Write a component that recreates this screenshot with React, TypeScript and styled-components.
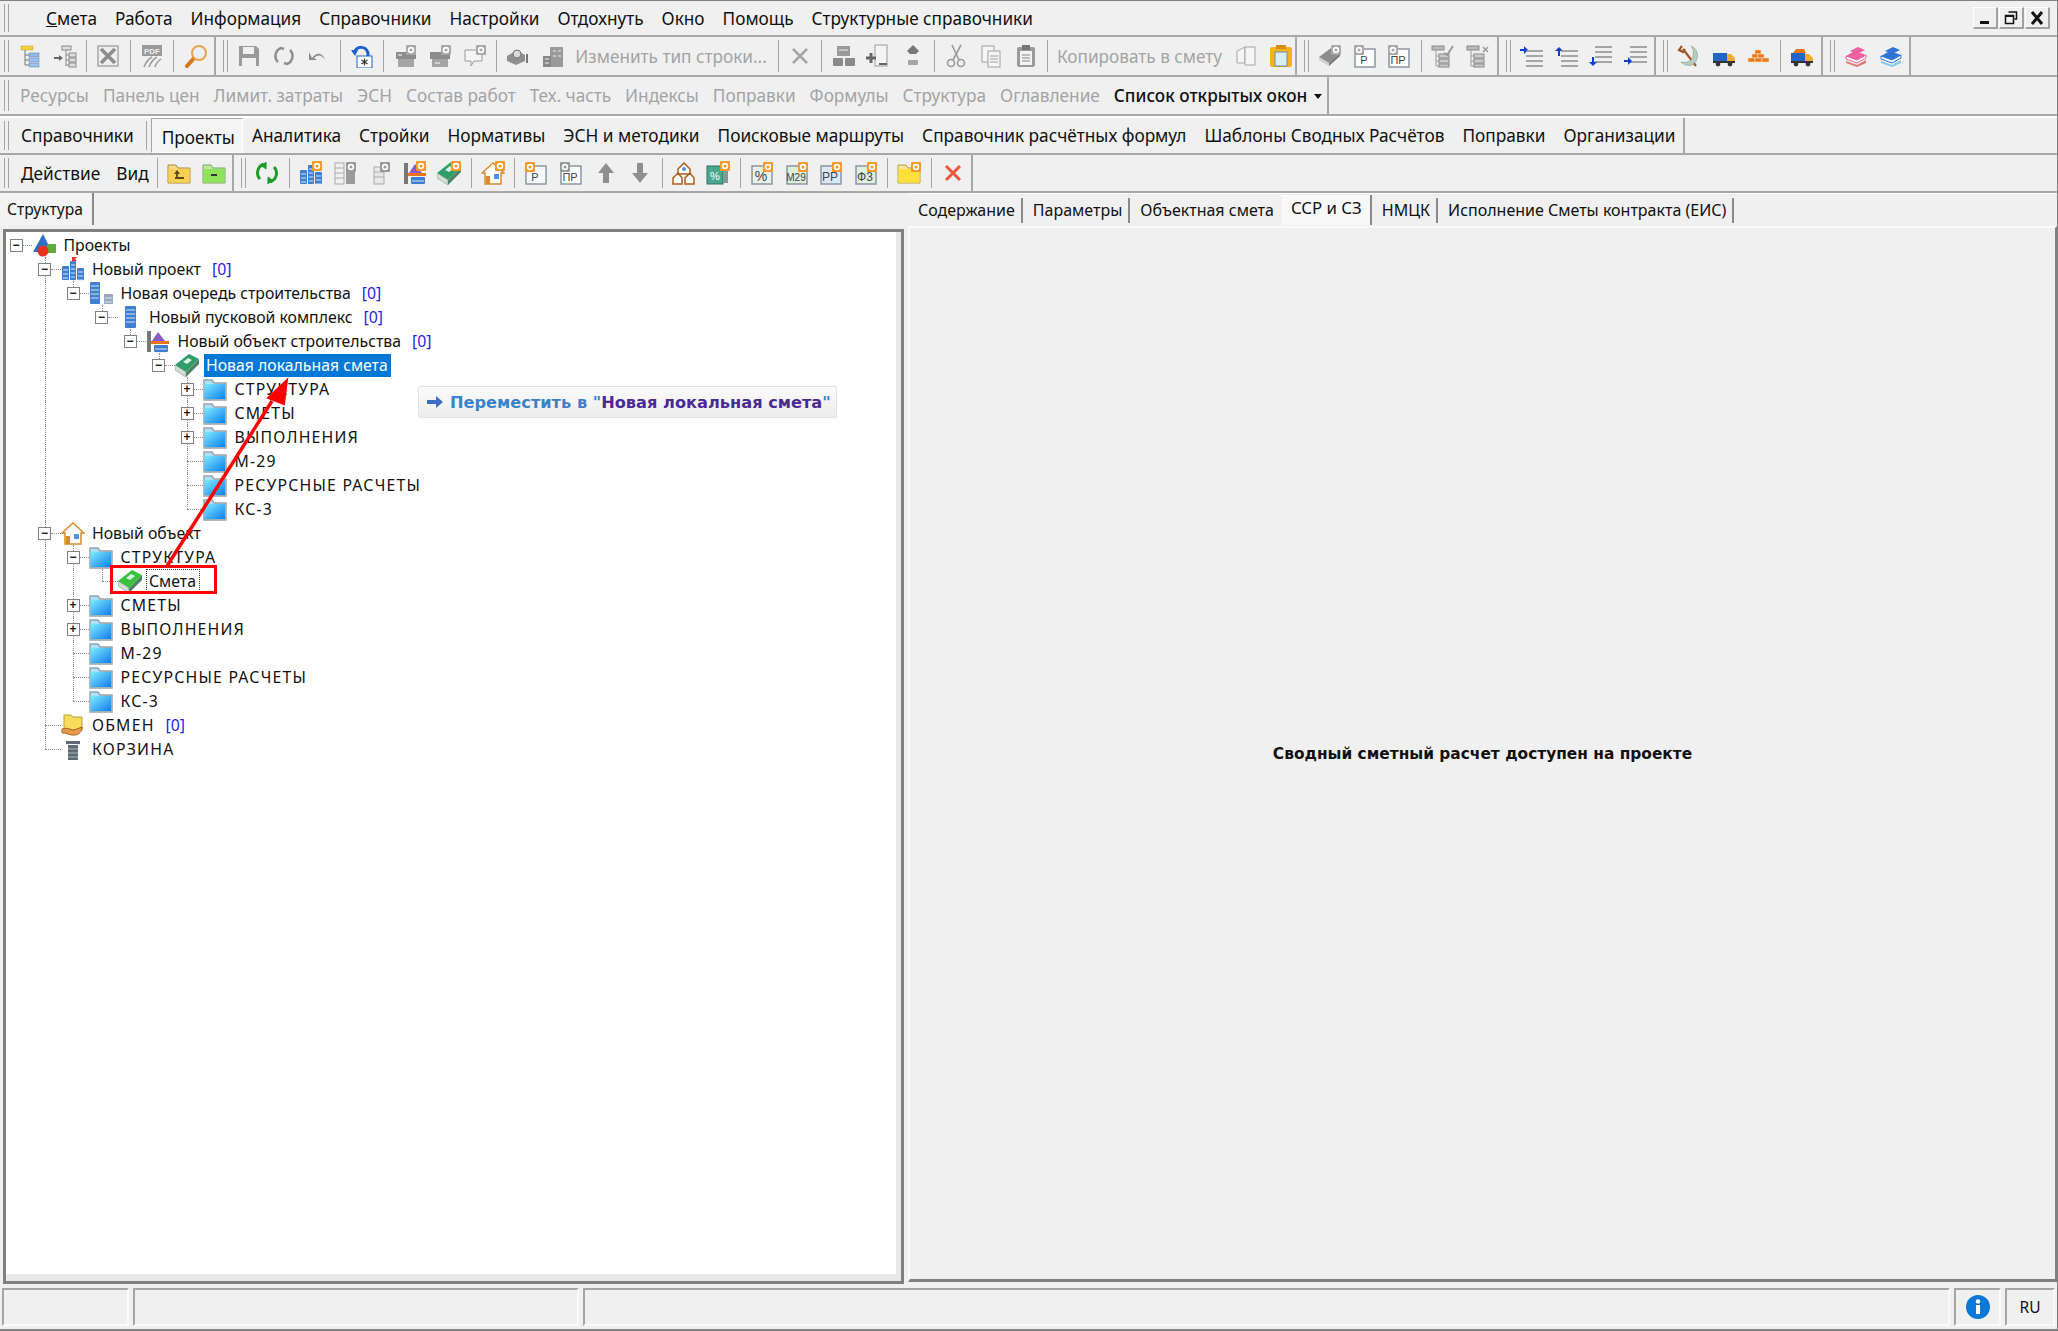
import React, { FC, ReactNode } from "react";
import styled, { createGlobalStyle } from "styled-components";

const UI_FONT = `"Noto Sans", "Liberation Sans", Arial, sans-serif`;

const GlobalStyle = createGlobalStyle`
  html, body { margin: 0; padding: 0; background: #f0f0f0; }
  body { font-family: ${UI_FONT}; color: #111; overflow: hidden; }
`;

//---------------------------------icons-----------------------------------
const Gear: FC<{ x: number; y: number; c?: string }> = ({ x, y, c = "#f39a2b" }) => (
  <g>
    <rect x={x} y={y} width="10" height="10" rx="1" fill={c} />
    <circle cx={x + 5} cy={y + 5} r="2.4" fill="none" stroke="#fff" strokeWidth="1.6" />
  </g>
);

const Folder: FC<{ a: string; b: string; edge?: string }> = ({ a, b, edge = "#8f9aa0" }) => (
  <g>
    <path d="M1 4h8l2 3h12v15H1z" fill={b} stroke={edge} />
    <rect x="1.5" y="8" width="21" height="13.5" fill={a} />
  </g>
);

const BlueFolder = () => (
  <g>
    <defs>
      <linearGradient id="folderFill" x1="0" y1="0" x2="1" y2="1">
        <stop offset="0" stopColor="#7fecff" />
        <stop offset="1" stopColor="#0a7fee" />
      </linearGradient>
    </defs>
    <path d="M1 3h8l2 3h12v17H1z" fill="#a7e4fa" stroke="#9aa3a8" strokeWidth="1.5" />
    <rect x="1.5" y="7" width="20.5" height="15" fill="url(#folderFill)" />
  </g>
);

const Arrow: FC<{ d: "l" | "r"; x: number; y: number }> = ({ d, x, y }) => (
  <path
    d={d === "r" ? `M${x} ${y - 1}h4v-3l4 4-4 4v-3h-4z` : `M${x + 8} ${y - 1}h-4v-3l-4 4 4 4v-3h4z`}
    fill="#0b3fd0"
  />
);

const Lines: FC<{ x: number; y: number; w: number }> = ({ x, y, w }) => (
  <g stroke="#8d8d8d" strokeWidth="1.5">
    {[0, 5, 10, 15].map((o) => (
      <path key={o} d={`M${x} ${y + o}h${w}`} />
    ))}
  </g>
);

const Doc: FC<{ label: string; gear?: string; gearRight?: boolean; fill?: string; c?: string; size?: number }> = ({
  label,
  gear,
  gearRight,
  fill = "#fff",
  c = "#444",
  size = 11,
}) => (
  <g>
    <rect x="2" y="5" width="20" height="18" fill={fill} stroke="#8a96a3" strokeWidth="1.5" />
    <text x="11" y="20" fontSize={size} fontFamily="Liberation Sans" textAnchor="middle" fill={c}>
      {label}
    </text>
    {gear && <Gear x={gearRight ? 13 : 1} y={1} c={gear} />}
  </g>
);

const Truck: FC<{ load?: boolean }> = ({ load }) => (
  <g>
    {load && <path d="M3 9l3-4h8l2 4z" fill="#e8751a" />}
    <rect x="1" y="9" width="14" height="8" fill="#1f66c8" />
    <path d="M15 10h4l4 4v4h-8z" fill="#e9b12b" />
    <rect x="1" y="17" width="22" height="2" fill="#333" />
    <circle cx="6" cy="20" r="2.4" fill="#333" />
    <circle cx="18" cy="20" r="2.4" fill="#333" />
  </g>
);

const Books: FC<{ a: string; b: string }> = ({ a, b }) => (
  <g>
    <path d="M2 12l9-5 11 4-9 5z" fill={a} />
    <path d="M2 12v3l11 4 9-5v-3l-9 5z" fill="#fff" stroke={a} />
    <path d="M2 17l11 4 9-5v3l-9 4-11-4z" fill={b} opacity=".75" />
    <path d="M6 7l8-4 7 3-8 4z" fill={a} />
  </g>
);

const Tall: FC<{ x: number; w: number; y?: number; c?: string }> = ({ x, w, y = 1, c = "#3f7fd0" }) => (
  <g>
    <rect x={x} y={y} width={w} height={23 - y} rx="1" fill={c} />
    {[4, 8, 12, 16].map((o) => (
      <path key={o} d={`M${x + 1} ${y + o}h${w - 2}`} stroke="#d6e6fa" />
    ))}
  </g>
);

const Bricks = (
  <g fill="#e8741c" stroke="#fbe3c6" strokeWidth=".6">
    <rect x="9" y="6" width="6" height="4" />
    <rect x="6" y="10" width="6" height="4" />
    <rect x="12" y="10" width="6" height="4" />
    <rect x="2" y="14" width="7" height="4" />
    <rect x="9" y="14" width="7" height="4" />
    <rect x="16" y="14" width="7" height="4" />
  </g>
);

const Buildings = (
  <g>
    <Tall x={1} w={7} y={9} />
    <Tall x={9} w={6} y={4} />
    <Tall x={16} w={7} y={11} />
  </g>
);

const Crane = (
  <g>
    <rect x="1" y="2" width="4" height="21" fill="#777" />
    <path d="M12 3l-6 9h13z" fill="#8a5bc4" />
    <rect x="5" y="12" width="18" height="3" fill="#e8741c" />
    <Tall x={8} w={14} y={16} />
  </g>
);

const GreenBook: FC<{ c?: string }> = ({ c = "#2e9e68" }) => (
  <g>
    <path d="M0 12L14 1l10 5-13 13z" fill={c} />
    <path d="M0 12l11 7v5L0 17z" fill="#d5ddd7" stroke="#7c9a86" strokeWidth=".6" />
    <path d="M11 19L24 6v5L11 24z" fill="#4e8263" />
    <path d="M8 9l5-4 4 2-5 4z" fill="#d7f0e2" />
  </g>
);

const House = (
  <g>
    <path d="M12 2L1 12h3v11h16V12h3z" fill="#fff" stroke="#d98a2a" strokeWidth="1.5" />
    <rect x="5" y="15" width="4" height="8" fill="#d98a2a" />
    <rect x="13" y="13" width="5" height="5" fill="#4b93e0" />
  </g>
);

const Cross: FC<{ c: string; w?: number }> = ({ c, w = 3 }) => (
  <path d="M5 5l14 14M19 5L5 19" stroke={c} strokeWidth={w} fill="none" />
);

const ICONS: Record<string, ReactNode> = {
  treeYellow: (
    <g>
      <rect x="3" y="2" width="12" height="4" fill="#f2d23a" stroke="#b9a030" strokeWidth=".5" />
      <path d="M7 6v15M7 11h4M7 16h4M7 21h4" stroke="#777" />
      <rect x="11" y="9" width="10" height="4" fill="#8db9e6" stroke="#5f7ea0" strokeWidth=".5" />
      <rect x="11" y="14" width="10" height="4" fill="#9bc2ea" stroke="#5f7ea0" strokeWidth=".5" />
      <rect x="11" y="19" width="10" height="4" fill="#9bc2ea" stroke="#5f7ea0" strokeWidth=".5" />
    </g>
  ),
  treeArrow: (
    <g>
      <path d="M1 13h5v-2l4 3-4 3v-2H1z" fill="#666" />
      <path d="M13 6v16M13 11h3M13 16h3M13 21h3" stroke="#888" />
      <rect x="9" y="2" width="9" height="4" fill="#ddd" stroke="#888" />
      <rect x="16" y="9" width="7" height="4" fill="#ddd" stroke="#888" />
      <rect x="16" y="14" width="7" height="4" fill="#ddd" stroke="#888" />
      <rect x="16" y="19" width="7" height="4" fill="#ddd" stroke="#888" />
    </g>
  ),
  excel: (
    <g>
      <rect x="2" y="2" width="20" height="20" fill="#eeeeee" stroke="#a8a8a8" strokeWidth="1.5" />
      <Cross c="#8c8c8c" w={3.5} />
    </g>
  ),
  pdf: (
    <g>
      <rect x="2" y="1" width="20" height="11" fill="#9a9a9a" />
      <text x="12" y="9.5" fontSize="8" fontWeight="700" fill="#eee" textAnchor="middle" fontFamily="Liberation Sans">
        PDF
      </text>
      <path d="M4 23c2-5 4-8 8-10M9 23c2-5 4-8 8-10M15 23c1-4 3-6 6-8" stroke="#9a9a9a" fill="none" strokeWidth="1.5" />
    </g>
  ),
  magnifier: (
    <g>
      <path d="M3 22l8-9" stroke="#d8741c" strokeWidth="4" strokeLinecap="round" />
      <circle cx="15" cy="9" r="7" fill="#e8f1fb" stroke="#e8a24a" strokeWidth="2" />
    </g>
  ),
  save: (
    <g>
      <path d="M2 2h17l3 3v17H2z" fill="#9a9a9a" />
      <rect x="6" y="3" width="11" height="7" fill="#f0f0f0" />
      <rect x="5" y="14" width="14" height="8" fill="#f0f0f0" />
    </g>
  ),
  refreshGray: (
    <g fill="none" stroke="#8f8f8f" strokeWidth="2.5">
      <path d="M6 18a8.5 8.5 0 0 1 3-14l3 1M18 6a8.5 8.5 0 0 1-3 14l-3-1" />
    </g>
  ),
  undoGray: <path d="M6 14l-3-6v8h8l-3-2c4-4 8-3 11 2-2-7-8-9-13-2z" fill="#8a8a8a" />,
  undoStar: (
    <g>
      <path d="M4 9c3-8 12-7 14 0v3" fill="none" stroke="#1d5fd0" strokeWidth="3" />
      <path d="M1 6l7 0-3 6z" fill="#1d5fd0" />
      <rect x="7" y="12" width="15" height="12" fill="#fff" stroke="#1d5fd0" />
      <path d="M14.5 14.5v7M11.5 16l6 4M17.5 16l-6 4" stroke="#333" strokeWidth="1.2" />
    </g>
  ),
  boxGear1: (
    <g>
      <rect x="2" y="8" width="20" height="7" fill="#8c8c8c" />
      <rect x="4" y="15" width="16" height="8" fill="#a5a5a5" />
      <Gear x={12} y={1} c="#a8a8a8" />
      <path d="M4 11h4" stroke="#fff" />
    </g>
  ),
  boxGear2: (
    <g>
      <rect x="2" y="8" width="20" height="7" fill="#8c8c8c" />
      <rect x="4" y="15" width="16" height="8" fill="#a5a5a5" />
      <Gear x={13} y={1} c="#a8a8a8" />
      <path d="M7 19h5" stroke="#fff" />
    </g>
  ),
  bubbleGear: (
    <g>
      <path d="M2 6h17v11h-8l-3 5v-5H2z" fill="#f5f5f5" stroke="#9a9a9a" />
      <Gear x={13} y={1} c="#a8a8a8" />
    </g>
  ),
  gearStack: (
    <g>
      <path d="M1 12l10-6 8 5v6l-9 4-9-4z" fill="#8f8f8f" />
      <circle cx="11" cy="10" r="4" fill="#d8d8d8" stroke="#777" />
      <path d="M21 10v9" stroke="#777" strokeWidth="2" />
    </g>
  ),
  buildingsGray: (
    <g>
      <rect x="9" y="3" width="13" height="20" fill="#9a9a9a" />
      <rect x="2" y="12" width="8" height="11" fill="#888" />
      <path d="M4 15h4M4 19h4M12 7h3M17 7h3M12 12h3M17 12h3" stroke="#eee" />
    </g>
  ),
  closeGray: <Cross c="#a5a5a5" w={2.5} />,
  calc: (
    <g>
      <rect x="5" y="2" width="13" height="10" fill="#9a9a9a" />
      <rect x="1" y="14" width="10" height="8" rx="1" fill="#8a8a8a" />
      <rect x="13" y="14" width="10" height="8" rx="1" fill="#8a8a8a" />
      <path d="M7 6h9" stroke="#eee" />
    </g>
  ),
  docPlus: (
    <g>
      <rect x="9" y="1" width="12" height="21" fill="#f4f4f4" stroke="#999" />
      <path d="M0 14h10M5 9v10" stroke="#666" strokeWidth="3" />
      <path d="M13 20h8" stroke="#666" strokeWidth="2" />
    </g>
  ),
  diamond: (
    <g fill="#777">
      <path d="M12 1l6 6-3 3H9L6 7z" />
      <rect x="7" y="16" width="10" height="5" rx="1" fill="#a5a5a5" />
    </g>
  ),
  scissors: (
    <g fill="none" stroke="#9a9a9a" strokeWidth="1.6">
      <path d="M8 1l7 15M17 1l-8 15" />
      <circle cx="7" cy="19" r="3.5" />
      <circle cx="17" cy="19" r="3.5" />
    </g>
  ),
  copy: (
    <g fill="#f5f5f5" stroke="#a0a0a0">
      <rect x="3" y="2" width="12" height="16" />
      <rect x="9" y="7" width="12" height="16" />
      <path d="M11 12h8M11 15h8M11 18h8" />
    </g>
  ),
  clipboard: (
    <g>
      <rect x="3" y="3" width="18" height="20" rx="2" fill="#9a9a9a" />
      <rect x="6" y="7" width="12" height="14" fill="#f2f2f2" />
      <rect x="8" y="1" width="8" height="5" fill="#777" />
      <path d="M8 11h8M8 14h8M8 17h8" stroke="#888" />
    </g>
  ),
  copyDocs: (
    <g fill="#f5f5f5" stroke="#a5a5a5">
      <path d="M3 7l8-4v16H3z" />
      <path d="M11 3h10v18H11z" />
    </g>
  ),
  clipYellow: (
    <g>
      <rect x="1" y="3" width="22" height="20" rx="2" fill="#f5b21f" />
      <rect x="7" y="1" width="10" height="4" fill="#d98e10" />
      <rect x="6" y="8" width="12" height="14" fill="#d8edf7" stroke="#6d8ea0" />
    </g>
  ),
  bookGearGray: (
    <g>
      <path d="M1 13L13 4l9 5-11 10z" fill="#8c8c8c" />
      <path d="M1 13l10 6v3L1 16z" fill="#ccc" />
      <path d="M11 19L22 9v3L11 22z" fill="#777" />
      <Gear x={13} y={1} c="#a8a8a8" />
    </g>
  ),
  pGray: <Doc label="Р" gear="#a8a8a8" />,
  prGray: <Doc label="ПР" gear="#a8a8a8" />,
  treeCheck: (
    <g>
      <rect x="1" y="2" width="12" height="4" fill="#bbb" stroke="#888" />
      <path d="M5 6v16M5 12h3M5 17h3M5 22h3" stroke="#999" />
      <rect x="8" y="10" width="10" height="4" fill="#ccc" stroke="#888" />
      <rect x="8" y="15" width="10" height="4" fill="#ccc" stroke="#888" />
      <rect x="8" y="20" width="10" height="3" fill="#ccc" stroke="#888" />
      <path d="M13 9l3 2 6-9" stroke="#999" strokeWidth="2" fill="none" />
    </g>
  ),
  treeX: (
    <g>
      <rect x="1" y="2" width="12" height="4" fill="#bbb" stroke="#888" />
      <path d="M5 6v16M5 12h3M5 17h3M5 22h3" stroke="#999" />
      <rect x="8" y="10" width="10" height="4" fill="#ccc" stroke="#888" />
      <rect x="8" y="15" width="10" height="4" fill="#ccc" stroke="#888" />
      <rect x="8" y="20" width="10" height="3" fill="#ccc" stroke="#888" />
      <path d="M17 3l5 5M22 3l-5 5" stroke="#999" strokeWidth="1.5" />
    </g>
  ),
  indentRight: (
    <g>
      <Arrow d="r" x={0} y={6} />
      <Lines x={6} y={7} w={17} />
    </g>
  ),
  indentUp: (
    <g>
      <path d="M3 10V5H0l4-4 4 4H5v5z" fill="#0b3fd0" transform="translate(0,2)" />
      <Lines x={6} y={7} w={17} />
    </g>
  ),
  indentDown: (
    <g>
      <Lines x={6} y={3} w={17} />
      <path d="M3 13v5H0l4 4 4-4H5v-5z" fill="#0b3fd0" />
    </g>
  ),
  indentLeft: (
    <g>
      <Lines x={6} y={3} w={17} />
      <Arrow d="r" x={0} y={17} />
    </g>
  ),
  hammer: (
    <g fill="none">
      <path d="M5 2l-3 4 4 2 2-3M6 5l13 17" stroke="#a0552a" strokeWidth="2.2" />
      <path d="M14 2c8 3 9 14 1 19-4 1-8 0-11-3 5 1 11 0 12-6 1-4 0-7-2-10z" fill="#b9cdbe" stroke="#7d9a86" strokeWidth=".6" />
    </g>
  ),
  truck: <Truck />,
  bricks: Bricks,
  truckLoad: <Truck load />,
  booksPink: <Books a="#ec5fa0" b="#e24c4c" />,
  booksBlue: <Books a="#2d74d6" b="#5fbbe8" />,
  folderUp: (
    <g>
      <Folder a="#f9cf55" b="#f4d98a" edge="#a98c3a" />
      <path d="M8 17h9M10 10v7" stroke="#5c4a18" strokeWidth="1.8" />
      <path d="M7 13l3-4 3 4z" fill="#5c4a18" />
    </g>
  ),
  folderGreen: (
    <g>
      <Folder a="#8fe25a" b="#bdeb9a" edge="#7da267" />
      <path d="M9 14h6" stroke="#333" strokeWidth="2" />
    </g>
  ),
  refreshGreen: (
    <g fill="none" stroke="#1f9a2c" strokeWidth="3">
      <path d="M5 18a9 9 0 0 1 3-14.5l3 1M19 6a9 9 0 0 1-3 14.5l-3-1" />
      <path d="M11 1v7l-4-3zM13 23v-7l4 3z" fill="#1f9a2c" strokeWidth="1" />
    </g>
  ),
  buildingsGear: (
    <g>
      {Buildings}
      <Gear x={13} y={0} />
    </g>
  ),
  columnsGray: (
    <g>
      <rect x="2" y="2" width="9" height="21" fill="#f0f0f0" stroke="#aaa" />
      <path d="M2 7h9M2 12h9M2 17h9" stroke="#aaa" />
      <rect x="13" y="9" width="9" height="14" fill="#9a9a9a" />
      <Gear x={13} y={1} c="#999" />
    </g>
  ),
  columnGray: (
    <g>
      <rect x="6" y="6" width="10" height="17" fill="#e8e8e8" stroke="#aaa" />
      <path d="M6 11h10M6 16h10" stroke="#aaa" />
      <Gear x={12} y={1} c="#999" />
    </g>
  ),
  craneGear: (
    <g>
      {Crane}
      <Gear x={13} y={0} />
    </g>
  ),
  bookGear: (
    <g>
      <GreenBook />
      <Gear x={14} y={0} />
    </g>
  ),
  houseGear: (
    <g>
      {House}
      <Gear x={14} y={0} />
    </g>
  ),
  pOrange: <Doc label="Р" gear="#f39a2b" fill="#f7f9ff" />,
  prSilver: <Doc label="ПР" gear="#999" />,
  upGray: <path d="M12 2l8 10h-5v10H9V12H4z" fill="#8f8f8f" />,
  downGray: <path d="M12 22l8-10h-5V2H9v10H4z" fill="#8f8f8f" />,
  houses: (
    <g fill="#fff" stroke="#b05a18" strokeWidth="1.5">
      <path d="M12 2L6 8v5h12V8z" />
      <path d="M6 12l-5 5v6h9v-6zM18 12l-5 5v6h9v-6z" />
      <circle cx="12" cy="8" r="2" fill="#4b93e0" stroke="none" />
    </g>
  ),
  percentStack: (
    <g>
      <rect x="1" y="5" width="16" height="18" fill="#4aa88f" stroke="#2f6f60" />
      <rect x="17" y="7" width="5" height="15" fill="#7f9c94" />
      <text x="9" y="19" fontSize="11" fontFamily="Liberation Sans" fill="#fff" textAnchor="middle">
        %
      </text>
      <Gear x={14} y={0} />
    </g>
  ),
  percent: <Doc label="%" gear="#f39a2b" gearRight fill="#e8f2ec" size={14} />,
  m29: <Doc label="М29" gear="#f39a2b" gearRight fill="#dcefd8" size={10} />,
  pp: <Doc label="РР" gear="#f39a2b" gearRight fill="#dde8f7" size={12} />,
  f3: <Doc label="Ф3" gear="#f39a2b" gearRight fill="#e0f0e0" size={12} />,
  folderGear: (
    <g>
      <Folder a="#ffe03a" b="#f7e79a" edge="#b79f3a" />
      <Gear x={14} y={1} />
    </g>
  ),
  closeRed: <Cross c="#f0563c" w={3} />,
  // tree nodes
  projects: (
    <g>
      <path d="M11 1l9 18H1z" fill="#2d6fc4" />
      <rect x="15" y="11" width="9" height="9" fill="#5fae3c" />
      <circle cx="11" cy="18" r="5.5" fill="#e8321c" />
    </g>
  ),
  buildings: (
    <g>
      {Buildings}
      <path d="M11 0h5l-2 2 2 2h-5z" fill="#e33" />
    </g>
  ),
  queue: (
    <g>
      <Tall x={1} w={10} y={1} />
      <Tall x={15} w={9} y={13} c="#9aa8ba" />
    </g>
  ),
  complex: <Tall x={7} w={11} y={1} />,
  crane: Crane,
  bookDark: <GreenBook />,
  bookBright: <GreenBook c="#39c23c" />,
  folderBlue: <BlueFolder />,
  house: House,
  exchange: (
    <g>
      <path d="M3 2h7l2 2h9v13H3z" fill="#f6dc58" stroke="#b79f3a" />
      <path d="M1 16c5-2 9 1 12 1l8-3c1 3-3 8-7 8-5 1-9-3-13-2z" fill="#e89a4a" stroke="#a9621f" />
    </g>
  ),
  trash: (
    <g>
      <rect x="5" y="4" width="14" height="3" fill="#5d6a75" />
      <rect x="7" y="8" width="10" height="15" fill="#5d6a75" />
      <path d="M7 12h10M7 16h10M7 20h10" stroke="#aab3ba" />
    </g>
  ),
};

const Icon: FC<{ name: string }> = ({ name }) => (
  <svg width="24" height="24" viewBox="0 0 24 24">
    {ICONS[name]}
  </svg>
);

//---------------------------------data-----------------------------------
type Tool = string; // "|" разделитель, "t:..." подпись, иначе имя иконки

const TOP_SECTIONS: { width: number; tools: Tool[] }[] = [
  { width: 216, tools: ["treeYellow", "treeArrow", "|", "excel", "|", "pdf", "|", "magnifier"] },
  {
    width: 1081,
    tools: [
      "save", "refreshGray", "undoGray", "|", "undoStar", "|", "boxGear1", "boxGear2", "bubbleGear", "|",
      "gearStack", "buildingsGray", "t:Изменить тип строки...", "|", "closeGray", "|", "calc", "docPlus", "diamond", "|",
      "scissors", "copy", "clipboard", "|", "t:Копировать в смету", "copyDocs", "clipYellow",
    ],
  },
  { width: 202, tools: ["bookGearGray", "pGray", "prGray", "|", "treeCheck", "treeX"] },
  { width: 157, tools: ["indentRight", "indentUp", "indentDown", "indentLeft"] },
  { width: 167, tools: ["hammer", "truck", "bricks", "|", "truckLoad"] },
  { width: 88, tools: ["booksPink", "booksBlue"] },
];

const REFS = ["Ресурсы", "Панель цен", "Лимит. затраты", "ЭСН", "Состав работ", "Тех. часть", "Индексы", "Поправки", "Формулы", "Структура", "Оглавление"];
const NAV = ["Аналитика", "Стройки", "Нормативы", "ЭСН и методики", "Поисковые маршруты", "Справочник расчётных формул", "Шаблоны Сводных Расчётов", "Поправки", "Организации"];
const MENU = ["Работа", "Информация", "Справочники", "Настройки", "Отдохнуть", "Окно", "Помощь", "Структурные справочники"];
const RIGHT_TABS = ["Содержание", "Параметры", "Объектная смета", "ССР и СЗ", "НМЦК", "Исполнение Сметы контракта (ЕИС)"];

const ACTION_TOOLS: Tool[] = [
  "refreshGreen", "|", "buildingsGear", "columnsGray", "columnGray", "craneGear", "bookGear", "|", "houseGear", "|",
  "pOrange", "prSilver", "upGray", "downGray", "|", "houses", "percentStack", "|", "percent", "m29", "pp", "f3", "|",
  "folderGear", "|", "closeRed",
];

type GuideKind = "f" | "t" | "b";
interface Node {
  level: number;
  label: string;
  icon: string;
  exp?: "-" | "+";
  count?: boolean;
  guides: [number, GuideKind][];
  selected?: boolean;
  focused?: boolean;
}

const inner: [number, GuideKind][] = [[1, "f"], [6, "f"]];
const lower: [number, GuideKind][] = [[1, "f"], [2, "f"]];

const TREE: Node[] = [
  { level: 0, label: "Проекты", icon: "projects", exp: "-", guides: [[1, "b"]] },
  { level: 1, label: "Новый проект", icon: "buildings", exp: "-", count: true, guides: [[1, "f"], [2, "b"]] },
  { level: 2, label: "Новая очередь строительства", icon: "queue", exp: "-", count: true, guides: [[1, "f"], [2, "t"], [3, "b"]] },
  { level: 3, label: "Новый пусковой комплекс", icon: "complex", exp: "-", count: true, guides: [[1, "f"], [3, "t"], [4, "b"]] },
  { level: 4, label: "Новый объект строительства", icon: "crane", exp: "-", count: true, guides: [[1, "f"], [4, "t"], [5, "b"]] },
  { level: 5, label: "Новая локальная смета", icon: "bookDark", exp: "-", selected: true, guides: [[1, "f"], [5, "t"], [6, "b"]] },
  { level: 6, label: "СТРУКТУРА", icon: "folderBlue", exp: "+", guides: inner },
  { level: 6, label: "СМЕТЫ", icon: "folderBlue", exp: "+", guides: inner },
  { level: 6, label: "ВЫПОЛНЕНИЯ", icon: "folderBlue", exp: "+", guides: inner },
  { level: 6, label: "М-29", icon: "folderBlue", guides: inner },
  { level: 6, label: "РЕСУРСНЫЕ РАСЧЕТЫ", icon: "folderBlue", guides: inner },
  { level: 6, label: "КС-3", icon: "folderBlue", guides: [[1, "f"], [6, "t"]] },
  { level: 1, label: "Новый объект", icon: "house", exp: "-", guides: [[1, "f"], [2, "b"]] },
  { level: 2, label: "СТРУКТУРА", icon: "folderBlue", exp: "-", guides: [[1, "f"], [2, "f"], [3, "b"]] },
  { level: 3, label: "Смета", icon: "bookBright", focused: true, guides: [[1, "f"], [2, "f"], [3, "t"]] },
  { level: 2, label: "СМЕТЫ", icon: "folderBlue", exp: "+", guides: lower },
  { level: 2, label: "ВЫПОЛНЕНИЯ", icon: "folderBlue", exp: "+", guides: lower },
  { level: 2, label: "М-29", icon: "folderBlue", guides: lower },
  { level: 2, label: "РЕСУРСНЫЕ РАСЧЕТЫ", icon: "folderBlue", guides: lower },
  { level: 2, label: "КС-3", icon: "folderBlue", guides: [[1, "f"], [2, "t"]] },
  { level: 1, label: "ОБМЕН", icon: "exchange", count: true, guides: [[1, "f"]] },
  { level: 1, label: "КОРЗИНА", icon: "trash", guides: [[1, "t"]] },
];

const ToolList: FC<{ tools: Tool[] }> = ({ tools }) => (
  <>
    {tools.map((tool, i) => {
      if (tool === "|") return <Sep key={i} />;
      if (tool.startsWith("t:")) return <ToolLabel key={i}>{tool.slice(2)}</ToolLabel>;
      return (
        <ToolButton key={i}>
          <Icon name={tool} />
        </ToolButton>
      );
    })}
  </>
);

export default function App() {
  return (
    <Page>
      <GlobalStyle />
      <MenuBar>
        <Grip $first />
        <MenuItems>
          <MenuItem>
            <u>С</u>мета
          </MenuItem>
          {MENU.map((m) => (
            <MenuItem key={m}>{m}</MenuItem>
          ))}
        </MenuItems>
        <WindowButtons>
          <WinButton>
            <svg width="14" height="14" viewBox="0 0 14 14">
              <rect x="2" y="10" width="9" height="3" fill="#111" />
            </svg>
          </WinButton>
          <WinButton>
            <svg width="14" height="14" viewBox="0 0 14 14" fill="none" stroke="#111">
              <path d="M4.5 1h8v7h-2" strokeWidth="1.5" />
              <rect x="1.5" y="4.5" width="8" height="8" strokeWidth="1.5" />
              <path d="M1 5h9" strokeWidth="2" />
            </svg>
          </WinButton>
          <WinButton>
            <svg width="14" height="14" viewBox="0 0 14 14">
              <path d="M2 1l10 12M12 1L2 13" stroke="#111" strokeWidth="3" />
            </svg>
          </WinButton>
        </WindowButtons>
      </MenuBar>

      <ToolRow>
        {TOP_SECTIONS.map((s, i) => (
          <Section key={i} $width={s.width}>
            <Grip $first={i === 0} />
            <ToolList tools={s.tools} />
          </Section>
        ))}
      </ToolRow>

      <TextRow>
        <Section $width={1329}>
          <Grip $first />
          <TextItems>
            {REFS.map((r) => (
              <TextItem key={r} $disabled>
                {r}
              </TextItem>
            ))}
            <TextItem $strong>
              Список открытых окон <Caret />
            </TextItem>
          </TextItems>
        </Section>
      </TextRow>

      <NavRow>
        <Section $width={1685}>
          <Grip $first />
          <NavItem $first $end={8}>
            Справочники
          </NavItem>
          <Sep />
          <ActiveNav>Проекты</ActiveNav>
          <NavItems>
            {NAV.map((n) => (
              <NavItem key={n}>{n}</NavItem>
            ))}
          </NavItems>
        </Section>
      </NavRow>

      <ActionRow>
        <Section $width={234}>
          <Grip $first />
          <NavItem $first>Действие</NavItem>
          <NavItem $near $end={4}>
            Вид
          </NavItem>
          <Sep />
          <ToolList tools={["folderUp", "folderGreen"]} />
        </Section>
        <Section $width={739}>
          <Grip />
          <ToolList tools={ACTION_TOOLS} />
        </Section>
      </ActionRow>

      <Workspace>
        <LeftColumn>
          <TabStrip>
            <LeftTab>Структура</LeftTab>
          </TabStrip>
          <TreeFrame>
            <TreeBody>
              {TREE.map((n, i) => (
                <TreeRow key={i} $level={n.level}>
                  {n.guides.map(([lvl, kind]) => (
                    <Guide key={lvl} $level={lvl} $kind={kind} />
                  ))}
                  <Slot $leaf={!n.exp}>{n.exp && <Expander>{n.exp === "+" ? "+" : "−"}</Expander>}</Slot>
                  <NodeIcon>
                    <Icon name={n.icon} />
                  </NodeIcon>
                  <NodeLabel $selected={n.selected} $focused={n.focused} $caps={n.label === n.label.toUpperCase()}>
                    {n.label}
                  </NodeLabel>
                  {n.count && <Count>[0]</Count>}
                </TreeRow>
              ))}
            </TreeBody>
          </TreeFrame>
        </LeftColumn>
        <RightColumn>
          <RightTabs>
            {RIGHT_TABS.map((t, i) => (
              <RightTab key={t} $active={t === "ССР и СЗ"} $beforeActive={RIGHT_TABS[i + 1] === "ССР и СЗ"}>
                {t}
              </RightTab>
            ))}
          </RightTabs>
          <RightPanel>
            <Notice>Сводный сметный расчет доступен на проекте</Notice>
          </RightPanel>
        </RightColumn>
      </Workspace>

      <StatusBar>
        <StatusCell $width={127} />
        <StatusCell $width={446} />
        <StatusCell $grow />
        <StatusCell $width={47}>
          <svg width="24" height="24" viewBox="0 0 24 24">
            <circle cx="12" cy="12" r="12" fill="#0a78d7" />
            <rect x="10" y="10" width="4" height="9" fill="#fff" />
            <circle cx="12" cy="6.5" r="2.2" fill="#fff" />
          </svg>
        </StatusCell>
        <StatusCell $width={50}>RU</StatusCell>
      </StatusBar>

      <MoveArrow width="400" height="260" viewBox="0 0 400 260">
        <path d="M67 205L172 40" stroke="#f00" strokeWidth="3.5" fill="none" />
        <path d="M187 19L168 37 184 43z" fill="#f00" stroke="#f00" strokeWidth="2" />
      </MoveArrow>
      <Highlight />
      <DragHint>
        <svg width="18" height="14" viewBox="0 0 18 14">
          <path d="M1 5h9V1l7 6-7 6V9H1z" fill="#3a6fc4" />
        </svg>
        <HintBlue>Переместить в "</HintBlue>
        <HintViolet>Новая локальная смета</HintViolet>
        <HintBlue>"</HintBlue>
      </DragHint>
    </Page>
  );
}

//---------------------------------styled component-----------------------------------
const Page = styled.div`
  position: relative;
  width: 2058px;
  height: 1331px;
  display: flex;
  flex-direction: column;
  background: #f0f0f0;
  border-top: 1px solid #808080;
  border-right: 1px solid #808080;
  box-sizing: border-box;
  overflow: hidden;
`;

const MenuBar = styled.div`
  height: 34px;
  flex: none;
  display: flex;
  align-items: center;
  border-bottom: 2px solid #a8a8a8;
`;

const Grip = styled.span<{ $first?: boolean }>`
  flex: none;
  align-self: stretch;
  width: 3px;
  margin: 3px ${(p) => (p.$first ? "4px" : "4px")} 3px ${(p) => (p.$first ? "4px" : "7px")};
  border-left: 1px solid #a5a5a5;
  border-right: 1px solid #a5a5a5;
`;

const MenuItems = styled.div`
  display: flex;
  gap: 18px;
  margin: 1px 0 0 33px;
  font-size: 17.2px;
`;

const MenuItem = styled.span`
  white-space: nowrap;
`;

const WindowButtons = styled.div`
  margin-left: auto;
  margin-right: 7px;
  display: flex;
  gap: 1px;
`;

const WinButton = styled.div`
  width: 25px;
  height: 22px;
  display: flex;
  align-items: center;
  justify-content: center;
  background: #f0f0f0;
  border-right: 2px solid #a0a0a0;
  border-bottom: 2px solid #a0a0a0;
  border-top: 1px solid #fff;
  border-left: 1px solid #fff;
  box-sizing: border-box;
`;

const ToolRow = styled.div`
  height: 38px;
  flex: none;
  display: flex;
  border-bottom: 2px solid #a8a8a8;
  box-sizing: content-box;
`;

const TextRow = styled(ToolRow)`
  height: 37px;
`;

const NavRow = styled(ToolRow)`
  height: 35px;
  border-top: 2px solid #fff;
`;

const ActionRow = styled(ToolRow)`
  height: 36px;
`;

const Section = styled.div<{ $width: number }>`
  width: ${(p) => p.$width}px;
  flex: none;
  display: flex;
  align-items: center;
  box-sizing: border-box;
  border-right: 2px solid #a8a8a8;
`;

const ToolButton = styled.div`
  flex: none;
  width: 34.6px;
  height: 26px;
  display: flex;
  align-items: center;
  justify-content: center;
`;

const Sep = styled.span`
  flex: none;
  align-self: stretch;
  width: 0;
  margin: 3px 4px;
  border-left: 1px solid #a5a5a5;
`;

const ToolLabel = styled.span`
  padding: 0 7px 0 0;
  margin-left: 5px;
  font-size: 17.2px;
  color: #a3a3a3;
  white-space: nowrap;
`;

const TextItems = styled.div`
  display: flex;
  gap: 14px;
  margin-left: 7px;
  font-size: 17.2px;
`;

const TextItem = styled.span<{ $disabled?: boolean; $strong?: boolean }>`
  white-space: nowrap;
  color: ${(p) => (p.$disabled ? "#a3a3a3" : "#111")};
  font-weight: ${(p) => (p.$strong ? 500 : 400)};
`;

const Caret = styled.span`
  display: inline-block;
  margin-left: 2px;
  vertical-align: 3px;
  border-left: 4px solid transparent;
  border-right: 4px solid transparent;
  border-top: 5px solid #111;
`;

const NavItem = styled.span<{ $first?: boolean; $near?: boolean; $end?: number }>`
  font-size: 17.25px;
  white-space: nowrap;
  margin-left: ${(p) => (p.$first ? "8px" : p.$near ? "16px" : "18px")};
  margin-right: ${(p) => p.$end ?? 0}px;
`;

const ActiveNav = styled.span`
  align-self: stretch;
  display: flex;
  align-items: center;
  padding: 3px 7px 0 10px;
  font-size: 17.25px;
  background: #f5f5f5;
  border-top: 1px solid #a5a5a5;
  border-left: 1px solid #a5a5a5;
  border-right: 1px solid #fff;
  border-bottom: 1px solid #fff;
`;

const NavItems = styled.div`
  display: flex;
  gap: 18px;
  margin-left: 9px;
  & > span {
    margin-left: 0;
  }
`;

const Workspace = styled.div`
  flex: 1;
  min-height: 0;
  display: grid;
  grid-template-columns: 908px 1fr;
`;

const LeftColumn = styled.div`
  display: flex;
  flex-direction: column;
  min-height: 0;
`;

const TabStrip = styled.div`
  height: 36px;
  flex: none;
  display: flex;
  align-items: stretch;
`;

const LeftTab = styled.div`
  padding: 0 9px 0 7px;
  display: flex;
  align-items: center;
  height: 32px;
  font-size: 15.6px;
  border-right: 2px solid #8a8a8a;
  background: #f3f3f3;
`;

const TreeFrame = styled.div`
  flex: 1;
  min-height: 0;
  margin-left: 3px;
  margin-right: 4px;
  padding: 0 5px 7px 0;
  background: #e8e8e8;
  border: 3px solid #808080;
  box-sizing: border-box;
`;

const TreeBody = styled.div`
  height: 100%;
  padding-top: 1px;
  box-sizing: border-box;
  background: #fff;
  overflow: hidden;
`;

const TreeRow = styled.div<{ $level: number }>`
  position: relative;
  height: 24px;
  display: flex;
  align-items: center;
  padding-left: ${(p) => p.$level * 28.5}px;
  font-size: 15.8px;
  white-space: nowrap;
`;

const Guide = styled.i<{ $level: number; $kind: GuideKind }>`
  position: absolute;
  left: ${(p) => 10 + p.$level * 28.5}px;
  top: ${(p) => (p.$kind === "b" ? "12px" : "0")};
  height: ${(p) => (p.$kind === "f" ? "24px" : "12px")};
  border-left: 1px dotted #8c8c8c;
`;

const Slot = styled.span<{ $leaf?: boolean }>`
  position: relative;
  flex: none;
  width: 20px;
  height: 24px;
  display: flex;
  align-items: center;
  justify-content: center;
  &::after {
    content: "";
    position: absolute;
    left: ${(p) => (p.$leaf ? "10px" : "16px")};
    right: -6px;
    top: 12px;
    border-top: 1px dotted #8c8c8c;
  }
`;

const Expander = styled.span`
  position: relative;
  z-index: 1;
  width: 11px;
  height: 11px;
  display: flex;
  align-items: center;
  justify-content: center;
  background: #fff;
  border: 1px solid #808080;
  font: 700 12px/1 "Liberation Sans", sans-serif;
  color: #111;
`;

const NodeIcon = styled.span`
  flex: none;
  position: relative;
  width: 24px;
  height: 24px;
  margin-left: 6px;
  background: #fff;
`;

const NodeLabel = styled.span<{ $selected?: boolean; $focused?: boolean; $caps?: boolean }>`
  margin-left: 5px;
  padding: 0 3px 0 2.5px;
  height: 23px;
  line-height: 23px;
  letter-spacing: ${(p) => (p.$caps ? "1.2px" : "0")};
  color: ${(p) => (p.$selected ? "#fff" : "#111")};
  background: ${(p) => (p.$selected ? "#0078d7" : "transparent")};
  outline: ${(p) => (p.$focused ? "1px dotted #333" : "none")};
`;

const Count = styled.span`
  margin-left: 8px;
  color: #1f1fe8;
`;

const RightColumn = styled.div`
  display: flex;
  flex-direction: column;
  min-height: 0;
`;

const RightTabs = styled.div`
  height: 33px;
  flex: none;
  display: flex;
  align-items: center;
  border-top: 1px solid #fff;
  box-sizing: border-box;
`;

const RightTab = styled.div<{ $active?: boolean; $beforeActive?: boolean }>`
  height: ${(p) => (p.$active ? "30px" : "25px")};
  padding: 0 ${(p) => (p.$active ? "8px" : "6px")} ${(p) => (p.$active ? "5px" : "0")} ${(p) => (p.$active ? "9px" : "10px")};
  display: flex;
  align-items: center;
  font-size: ${(p) => (p.$active ? "16.8px" : "16px")};
  white-space: nowrap;
  border-right: 2px solid ${(p) => (p.$beforeActive ? "transparent" : "#8a8a8a")};
  background: ${(p) => (p.$active ? "#f8f8f8" : "#f0f0f0")};
  box-sizing: border-box;
`;

const RightPanel = styled.div`
  flex: 1;
  display: flex;
  align-items: center;
  justify-content: center;
  border-bottom: 3px solid #808080;
  border-right: 2px solid #808080;
  border-top: 2px solid #fafafa;
  border-left: 2px solid #fafafa;
  margin-bottom: 2px;
  background: #f0f0f0;
  box-sizing: border-box;
`;

const Notice = styled.div`
  font: 700 15.4px "DejaVu Sans", sans-serif;
  color: #111;
`;

const StatusBar = styled.div`
  height: 47px;
  flex: none;
  display: flex;
  border-bottom: 2px solid #808080;
  box-sizing: border-box;
`;

const StatusCell = styled.div<{ $width?: number; $grow?: boolean }>`
  flex: ${(p) => (p.$grow ? "1" : "none")};
  width: ${(p) => (p.$width ? `${p.$width}px` : "auto")};
  margin: 4px 2px 3px 2px;
  display: flex;
  align-items: center;
  justify-content: center;
  font-size: 15.5px;
  border-top: 2px solid #a5a5a5;
  border-left: 2px solid #a5a5a5;
  border-right: 2px solid #fafafa;
  border-bottom: 2px solid #fafafa;
  box-sizing: border-box;
`;

const MoveArrow = styled.svg`
  position: absolute;
  left: 100px;
  top: 360px;
  pointer-events: none;
`;

const Highlight = styled.div`
  position: absolute;
  left: 110px;
  top: 564px;
  width: 107px;
  height: 29px;
  border: 3px solid #f00;
  box-sizing: border-box;
`;

const DragHint = styled.div`
  position: absolute;
  left: 418px;
  top: 385px;
  width: 419px;
  height: 32px;
  display: flex;
  align-items: center;
  padding-left: 7px;
  box-sizing: border-box;
  background: linear-gradient(#fbfbfb, #ececec);
  border: 1px solid #e2e2e2;
  border-radius: 2px;
  font: 700 16.2px "DejaVu Sans", sans-serif;
  white-space: nowrap;
  svg {
    margin-right: 6px;
  }
`;

const HintBlue = styled.span`
  color: #3a82c8;
`;

const HintViolet = styled.span`
  color: #4a2a96;
`;
